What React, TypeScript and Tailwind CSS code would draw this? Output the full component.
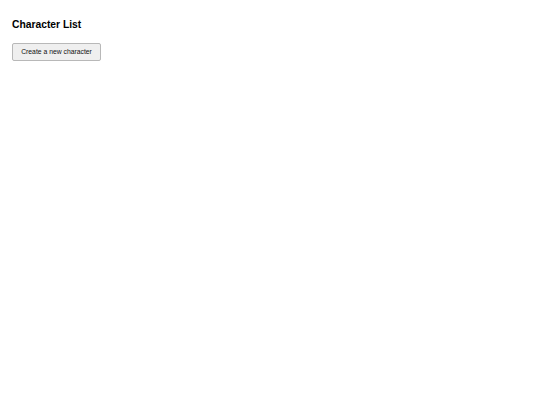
import React from "react";

const App = () => {
  return (
    <div className="min-h-screen bg-white px-3 pt-[19px] font-['Liberation_Sans',Arial,sans-serif] text-black">
      <h2 className="text-[10.3px] font-bold leading-[12px]">Character List</h2>
      <button
        type="button"
        className="mt-[12px] flex h-[18px] w-[89px] items-center justify-center rounded-[2px] border border-[#b8b8b8] bg-[#efefef] text-[6.8px] leading-none text-[#111]"
      >
        Create a new character
      </button>
    </div>
  );
};

export default App;
